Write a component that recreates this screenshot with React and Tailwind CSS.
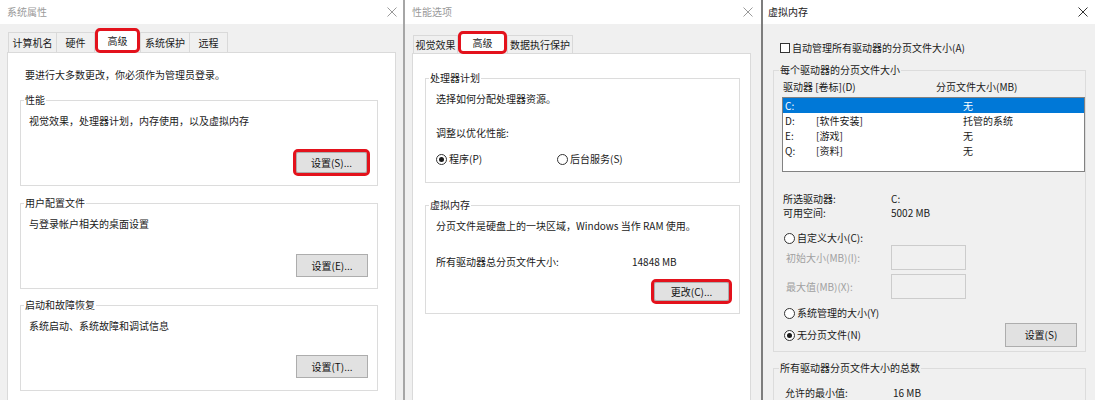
import React from "react";

const CloseX = ({ color }) => (
  <svg width="10" height="10" viewBox="0 0 10 10" className="shrink-0">
    <path d="M0.5 0.5 L9.5 9.5 M9.5 0.5 L0.5 9.5" stroke={color} strokeWidth="1" fill="none" />
  </svg>
);

const Btn = ({ children, className = "", red = false }) => (
  <div
    className={
      "flex items-center justify-center bg-[#e1e1e1] border border-[#adadad] text-[#111] " +
      className +
      (red ? " relative z-10 outline-3 outline-[#e3121c] rounded-[2px]" : "")
    }
  >
    {children}
  </div>
);

const Radio = ({ checked }) => (
  <span className="w-[11px] h-[11px] shrink-0 rounded-full border border-[#333] bg-white flex items-center justify-center">
    {checked && <span className="w-[5px] h-[5px] rounded-full bg-[#1a1a1a]" />}
  </span>
);

const Group = ({ title, className = "", children }) => (
  <fieldset className={"border border-[#dcdcdc] min-w-0 shrink-0 " + className}>
    <legend className="ml-[3px] px-[1px] leading-[14px]">{title}</legend>
    {children}
  </fieldset>
);

function Window1() {
  const Tab = ({ children, className = "" }) => (
    <div
      className={
        "h-[20px] flex items-center justify-center border-t border-l border-r border-[#d9d9d9] bg-[#f0f0f0] " +
        className
      }
    >
      {children}
    </div>
  );
  return (
    <div className="w-[405px] shrink-0 flex flex-col border-r-2 border-[#a6a6a6] bg-[#f0f0f0]">
      <div className="h-[24px] shrink-0 bg-white flex items-center justify-between pl-[7px] pr-[6px] text-[#9a9a9a]">
        <span>系统属性</span>
        <CloseX color="#9a9a9a" />
      </div>
      <div className="flex-1 flex flex-col pl-[7px] pr-[7px] pt-[6px]">
        <div className="h-[22px] shrink-0 flex items-end pl-[1px]">
          <Tab className="w-[49px]">计算机名</Tab>
          <Tab className="w-[38px] border-l-0">硬件</Tab>
          <div className="w-[39px] h-[19px] mx-[3px] mb-[2px] flex items-center justify-center bg-white relative z-10 outline-3 outline-[#e3121c] rounded-[2px]">
            高级
          </div>
          <Tab className="w-[50px]">系统保护</Tab>
          <Tab className="w-[38px] border-l-0">远程</Tab>
        </div>
        <div className="flex-1 bg-white border border-[#dadada] border-b-0 pl-[12px] pt-[15px]">
          <div className="ml-[5px] h-[14px]">要进行大多数更改，你必须作为管理员登录。</div>
          <Group title="性能" className="w-[358px] h-[93px] mt-[11px]">
            <div className="px-[8px]">
              <div className="mt-[7px]">视觉效果，处理器计划，内存使用，以及虚拟内存</div>
              <div className="flex justify-end pr-[2px] mt-[24px]">
                <Btn red className="w-[71px] h-[21px]">设置(S)...</Btn>
              </div>
            </div>
          </Group>
          <Group title="用户配置文件" className="w-[358px] h-[93px] mt-[10px]">
            <div className="px-[8px]">
              <div className="mt-[7px]">与登录帐户相关的桌面设置</div>
              <div className="flex justify-end pr-[1px] mt-[23px]">
                <Btn className="w-[72px] h-[23px]">设置(E)...</Btn>
              </div>
            </div>
          </Group>
          <Group title="启动和故障恢复" className="w-[358px] h-[93px] mt-[9px]">
            <div className="px-[8px]">
              <div className="mt-[7px]">系统启动、系统故障和调试信息</div>
              <div className="flex justify-end pr-[1px] mt-[22px]">
                <Btn className="w-[72px] h-[23px]">设置(T)...</Btn>
              </div>
            </div>
          </Group>
        </div>
      </div>
    </div>
  );
}

function Window2() {
  const Tab = ({ children, className = "" }) => (
    <div
      className={
        "h-[18px] flex items-center justify-center border-t border-l border-r border-[#d9d9d9] bg-[#f0f0f0] " +
        className
      }
    >
      {children}
    </div>
  );
  return (
    <div className="w-[358px] shrink-0 flex flex-col border-r-2 border-[#7d7d7d] bg-[#f0f0f0]">
      <div className="h-[24px] shrink-0 bg-white flex items-center justify-between pl-[7px] pr-[8px] text-[#9a9a9a]">
        <span>性能选项</span>
        <CloseX color="#9a9a9a" />
      </div>
      <div className="flex-1 flex flex-col pl-[7px] pr-[10px] pt-[9px]">
        <div className="h-[20px] shrink-0 flex items-end pl-[1px]">
          <Tab className="w-[45px]">视觉效果</Tab>
          <div className="w-[43px] h-[17px] mx-[3px] mb-[2px] flex items-center justify-center bg-white relative z-10 outline-3 outline-[#e3121c] rounded-[2px]">
            高级
          </div>
          <Tab className="w-[66px]">数据执行保护</Tab>
        </div>
        <div className="flex-1 bg-white border border-[#dadada] border-b-0 pl-[12px] pt-[17px]">
          <Group title="处理器计划" className="w-[315px] h-[112px]">
            <div className="px-[10px]">
              <div className="mt-[7px]">选择如何分配处理器资源。</div>
              <div className="mt-[20px]">调整以优化性能:</div>
              <div className="mt-[12px] flex items-center h-[14px]">
                <div className="w-[121px] flex items-center gap-[2px]">
                  <Radio checked />
                  <span>程序(P)</span>
                </div>
                <div className="flex items-center gap-[2px]">
                  <Radio />
                  <span>后台服务(S)</span>
                </div>
              </div>
            </div>
          </Group>
          <Group title="虚拟内存" className="w-[315px] h-[116px] mt-[15px]">
            <div className="px-[10px]">
              <div className="mt-[7px]">分页文件是硬盘上的一块区域，Windows 当作 RAM 使用。</div>
              <div className="mt-[22px] flex">
                <span className="w-[196px]">所有驱动器总分页文件大小:</span>
                <span>14848 MB</span>
              </div>
              <div className="mt-[13px] flex justify-end">
                <Btn red className="w-[75px] h-[19px]">更改(C)...</Btn>
              </div>
            </div>
          </Group>
        </div>
      </div>
    </div>
  );
}

function Window3() {
  const rows = [
    { d: "C:", l: "", s: "无", sel: true },
    { d: "D:", l: "[软件安装]", s: "托管的系统" },
    { d: "E:", l: "[游戏]", s: "无" },
    { d: "Q:", l: "[资料]", s: "无" },
  ];
  return (
    <div className="flex-1 flex flex-col bg-[#f0f0f0]">
      <div className="h-[24px] shrink-0 bg-white flex items-center justify-between pl-[5px] pr-[7px] text-[#1a1a1a]">
        <span>虚拟内存</span>
        <CloseX color="#333" />
      </div>
      <div className="flex-1 pl-[10px] pt-[17px]">
        <div className="h-[14px] flex items-center ml-[7px] gap-[2px]">
          <span className="w-[10px] h-[10px] border border-[#333] bg-white shrink-0" />
          <span>自动管理所有驱动器的分页文件大小(A)</span>
        </div>
        <fieldset className="border border-[#dcdcdc] w-[313px] h-[289px] mt-[8px] min-w-0">
          <legend className="ml-[5px] px-[1px] leading-[14px]">每个驱动器的分页文件大小</legend>
          <div className="pl-[8px]">
            <div className="mt-[3px] flex pl-[1px]">
              <span className="w-[153px]">驱动器 [卷标](D)</span>
              <span>分页文件大小(MB)</span>
            </div>
            <div className="mt-[3px] h-[75px] border border-[#828282] bg-white">
              {rows.map((r) => (
                <div
                  key={r.d}
                  className={
                    "h-[15px] leading-[15px] flex pl-[2px] " +
                    (r.sel ? "bg-[#0078d7] text-white" : "")
                  }
                >
                  <span className="w-[31px]">{r.d}</span>
                  <span className="w-[147px]">{r.l}</span>
                  <span>{r.s}</span>
                </div>
              ))}
            </div>
            <div className="mt-[20px] flex pl-[1px]">
              <span className="w-[108px]">所选驱动器:</span>
              <span>C:</span>
            </div>
            <div className="flex pl-[1px]">
              <span className="w-[108px]">可用空间:</span>
              <span>5002 MB</span>
            </div>
            <div className="mt-[11px] h-[14px] flex items-center gap-[2px] pl-[2px]">
              <Radio />
              <span>自定义大小(C):</span>
            </div>
            <div className="h-[25px] flex items-center">
              <span className="w-[109px] pl-[4px] text-[#a0a0a0]">初始大小(MB)(I):</span>
              <span className="w-[75px] h-[25px] border border-[#cccccc] bg-[#f0f0f0]" />
            </div>
            <div className="mt-[4px] h-[25px] flex items-center">
              <span className="w-[109px] pl-[4px] text-[#a0a0a0]">最大值(MB)(X):</span>
              <span className="w-[75px] h-[25px] border border-[#cccccc] bg-[#f0f0f0]" />
            </div>
            <div className="mt-[7px] h-[14px] flex items-center gap-[2px] pl-[2px]">
              <Radio />
              <span>系统管理的大小(Y)</span>
            </div>
            <div className="mt-[3px] h-[24px] flex items-center justify-between pr-[8px]">
              <div className="flex items-center gap-[2px] pl-[2px]">
                <Radio checked />
                <span>无分页文件(N)</span>
              </div>
              <Btn className="w-[72px] h-[24px]">设置(S)</Btn>
            </div>
          </div>
        </fieldset>
        <fieldset className="border border-[#dcdcdc] w-[313px] h-[60px] mt-[9px] min-w-0">
          <legend className="ml-[5px] px-[1px] leading-[14px]">所有驱动器分页文件大小的总数</legend>
          <div className="mt-[11px] flex pl-[11px]">
            <span className="w-[108px]">允许的最小值:</span>
            <span>16 MB</span>
          </div>
        </fieldset>
      </div>
    </div>
  );
}

export default function App() {
  return (
    <div className="w-[1095px] h-[400px] overflow-hidden flex bg-[#f0f0f0] text-[10px] leading-[14px] text-[#1a1a1a] font-['Noto_Sans_CJK_SC','Noto_Sans',sans-serif]">
      <Window1 />
      <Window2 />
      <Window3 />
    </div>
  );
}
